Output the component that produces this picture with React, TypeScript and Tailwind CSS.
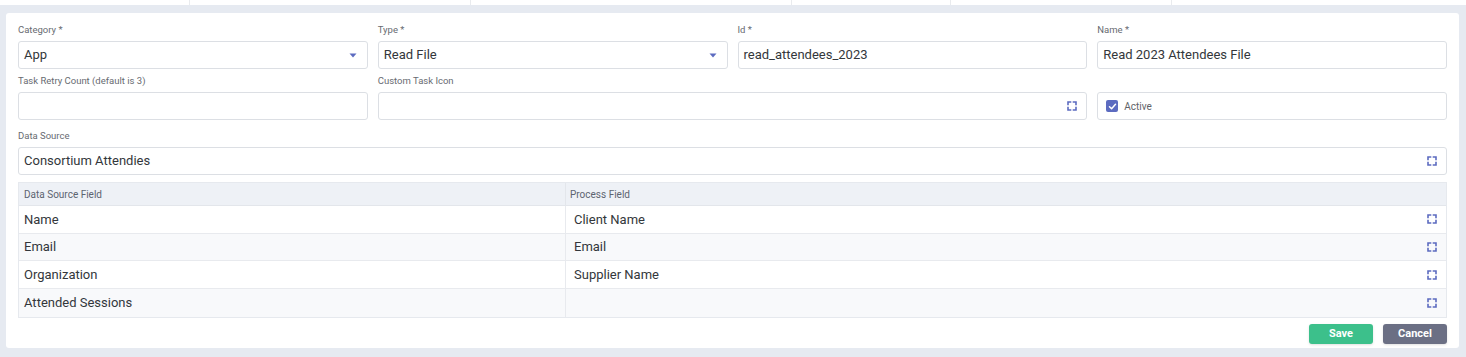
import React from "react";

const font = { fontFamily: "Roboto, 'Noto Sans', sans-serif" };

function ExpandIcon() {
  return (
    <svg width="10" height="10" viewBox="0 0 10 10" fill="none" stroke="#5c6bc0" strokeWidth="1.6" strokeLinecap="square">
      <path d="M1 3.5V1H3.5" />
      <path d="M6.5 1H9V3.5" />
      <path d="M9 6.5V9H6.5" />
      <path d="M3.5 9H1V6.5" />
    </svg>
  );
}

function Caret() {
  return (
    <svg width="8" height="5" viewBox="0 0 8 5">
      <path d="M0.5 0.5H7.5L4 4.5Z" fill="#5c6bc0" />
    </svg>
  );
}

function Label({ children }: { children?: React.ReactNode }) {
  return <div className="h-[23px] flex items-center text-[9.5px] text-[#676b71] leading-none pt-[1px]">{children}</div>;
}

function Box({ children, className = "" }: { children?: React.ReactNode; className?: string }) {
  return (
    <div className={`h-[28px] border border-[#dcdfe4] rounded-[3px] bg-white flex items-center pl-[5px] pr-[9px] text-[13px] text-[#33373b] ${className}`}>
      {children}
    </div>
  );
}

export default function App() {
  const rows = [
    ["Name", "Client Name"],
    ["Email", "Email"],
    ["Organization", "Supplier Name"],
    ["Attended Sessions", ""],
  ];
  const tabs = [190, 281, 321, 159, 221];
  return (
    <div className="w-[1466px] h-[357px] bg-[#e6eaf1] overflow-hidden" style={font}>
      <div className="h-[5px] bg-white flex">
        {tabs.map((w, i) => (
          <div key={i} className="h-full border-r border-[#e9ebee]" style={{ width: w }} />
        ))}
      </div>
      <div className="ml-[6px] mt-[8px] w-[1453px] h-[335px] bg-white rounded-[3px] px-[12px] pt-[5px]">
        <div className="grid grid-cols-4 gap-x-[10px]">
          <div>
            <Label>Category *</Label>
            <Box className="justify-between !pr-[10px]">
              <span>App</span>
              <Caret />
            </Box>
          </div>
          <div>
            <Label>Type *</Label>
            <Box className="justify-between !pr-[10px]">
              <span>Read File</span>
              <Caret />
            </Box>
          </div>
          <div>
            <Label>Id *</Label>
            <Box>read_attendees_2023</Box>
          </div>
          <div>
            <Label>Name *</Label>
            <Box>Read 2023 Attendees File</Box>
          </div>
          <div>
            <Label>Task Retry Count (default is 3)</Label>
            <Box />
          </div>
          <div className="col-span-2">
            <Label>Custom Task Icon</Label>
            <Box className="justify-end">
              <ExpandIcon />
            </Box>
          </div>
          <div>
            <Label />
            <Box className="!pl-[8px] gap-[6px]">
              <span className="w-[12px] h-[12px] rounded-[2px] bg-[#5c6bc0] flex items-center justify-center">
                <svg width="9" height="9" viewBox="0 0 9 9" fill="none" stroke="white" strokeWidth="1.5" strokeLinecap="round" strokeLinejoin="round">
                  <path d="M1.5 4.7L3.6 6.7L7.5 2.3" />
                </svg>
              </span>
              <span className="text-[10px] text-[#5f6368]">Active</span>
            </Box>
          </div>
        </div>
        <div className="mt-[4px]">
          <Label>Data Source</Label>
          <Box className="justify-between">
            <span>Consortium Attendies</span>
            <ExpandIcon />
          </Box>
        </div>
        <div className="mt-[7px] border border-[#e6e9ee]">
          <div className="flex h-[23px] bg-[#eef1f6] text-[10px] text-[#5d6470] border-b border-[#e3e6eb]">
            <div className="w-[547px] pl-[5px] flex items-center border-r border-[#e3e6eb]">Data Source Field</div>
            <div className="flex-1 pl-[4px] flex items-center">Process Field</div>
          </div>
          {rows.map(([a, b], i) => (
            <div
              key={i}
              className={`flex h-[27.7px] text-[13px] text-[#33373b] ${i % 2 === 1 ? "bg-[#f8f9fb]" : "bg-white"} ${i < rows.length - 1 ? "border-b border-[#e8eaee]" : ""}`}
            >
              <div className="w-[547px] pl-[5px] flex items-center border-r border-[#e8eaee]">{a}</div>
              <div className="flex-1 pl-[8px] pr-[9px] flex items-center justify-between">
                <span>{b}</span>
                <ExpandIcon />
              </div>
            </div>
          ))}
        </div>
        <div className="flex justify-end gap-[10px] mt-[6px]">
          <button className="w-[64px] h-[20px] rounded-[3px] bg-[#3cc08b] text-white text-[11px] font-bold shadow-sm">Save</button>
          <button className="w-[64px] h-[20px] rounded-[3px] bg-[#6b6f84] text-white text-[11px] font-bold shadow-sm">Cancel</button>
        </div>
      </div>
    </div>
  );
}
